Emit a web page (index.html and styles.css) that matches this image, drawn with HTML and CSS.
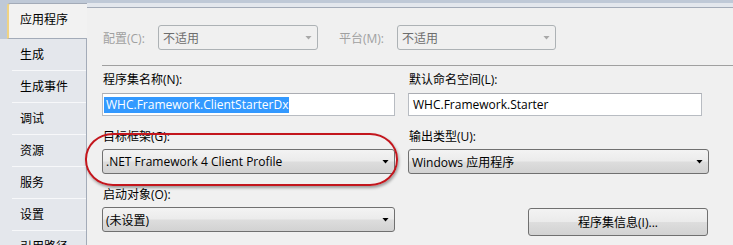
FILE: index.html
```html
<!DOCTYPE html>
<html lang="zh-CN">
  <head>
    <meta charset="UTF-8" />
    <title>应用程序</title>
    <link rel="stylesheet" href="styles.css">
  </head>
  <body>
    <div class="window">
      <!-- Left tabs -->
      <nav class="tabs">
        <div class="tab-head">
          <div class="tab tab-active">应用程序</div>
        </div>
        <div class="tab-list">
          <div class="tab">生成</div>
          <div class="tab">生成事件</div>
          <div class="tab">调试</div>
          <div class="tab">资源</div>
          <div class="tab">服务</div>
          <div class="tab">设置</div>
          <div class="tab">引用路径</div>
        </div>
      </nav>

      <!-- Page -->
      <main class="page">
        <div class="config-row">
          <span class="label-off label-config">配置(C):</span>
          <div class="combo combo-off combo-config">不适用</div>
          <span class="label-off label-platform">平台(M):</span>
          <div class="combo combo-off combo-platform">不适用</div>
        </div>
        <div class="divider"></div>

        <div class="form">
          <div class="field">
            <p class="label label-text">程序集名称(N):</p>
            <div class="textbox"><span class="selected">WHC.Framework.ClientStarterDx</span></div>
          </div>
          <div class="field">
            <p class="label label-text">默认命名空间(L):</p>
            <div class="textbox textbox-right">WHC.Framework.Starter</div>
          </div>

          <div class="field">
            <p class="label">目标框架(G):</p>
            <div class="combo">.NET Framework 4 Client Profile</div>
          </div>
          <div class="field">
            <p class="label">输出类型(U):</p>
            <div class="combo">Windows 应用程序</div>
          </div>

          <div class="field">
            <p class="label">启动对象(O):</p>
            <div class="combo">(未设置)</div>
          </div>
          <div class="field">
            <button class="button" type="button">程序集信息(I)...</button>
          </div>
        </div>
      </main>
    </div>

    <!-- red annotation ring -->
    <div class="callout"></div>
  </body>
</html>
```

FILE: styles.css
```css
* {
  margin: 0;
  padding: 0;
  box-sizing: border-box;
}
body {
  position: relative;
  width: 733px;
  height: 245px;
  overflow: hidden;
  background-color: #bfc9d7;
  font-family: "Open Sans", "Noto Sans CJK SC", sans-serif;
  font-size: 12px;
  color: #000;
}

.window {
  display: flex;
  margin-top: 3px;
  height: 242px;
  background-color: #e3e7ed;
}

/* Tabs */
.tabs {
  width: 87px;
  flex: none;
  display: flex;
  flex-direction: column;
}
.tab-head {
  padding-left: 7px;
  background-color: #bfc9d7;
}
.tab {
  height: 32px;
  padding-left: 20px;
  line-height: 32px;
  border-bottom: 1px solid #f7f8fa;
}
.tab-active {
  height: 36px;
  line-height: 32px;
  padding-left: 11px;
  background-color: #f2f2f2;
  border-top: 1px solid #a3abb8;
  border-bottom: 1px solid #a3abb8;
  border-left: 2px solid #efd384;
  border-top-left-radius: 3px;
}
.tab-list {
  flex: 1;
  background-color: #e4e7ec;
  border-right: 1px solid #a3abb8;
}
.tab-list .tab {
  margin-left: 12px;
  padding-left: 8px;
}

/* Page */
.page {
  flex: 1;
  margin-top: 4px;
  padding: 17px 0 0 15px;
  background-color: #f0f0f0;
  border-top: 1px solid #a3abb8;
}

.config-row {
  display: flex;
  align-items: center;
  height: 25px;
}
.label-off {
  color: #a0a0a0;
  padding-left: 1px;
}
.label-config {
  width: 56px;
}
.label-platform {
  width: 59px;
  margin-left: 20px;
}
.combo-config {
  width: 160px;
}
.combo-platform {
  width: 159px;
}

.divider {
  margin-top: 15px;
  height: 1px;
  background-color: #a0a0a0;
}

.form {
  display: grid;
  grid-template-columns: 293px 301px;
  column-gap: 13px;
  row-gap: 13px;
  margin-top: 6px;
}

.label {
  height: 16px;
  line-height: 16px;
  padding-left: 1px;
  margin-bottom: 4px;
}
.label-text {
  margin-bottom: 5px;
}

.textbox {
  height: 23px;
  padding: 3px 0 0 1px;
  line-height: 16px;
  background-color: #fff;
  border: 1px solid #b8bcc2;
  border-top-color: #abadb3;
  white-space: nowrap;
}
.textbox-right {
  width: 294px;
  padding-left: 4px;
}
.selected {
  display: inline-block;
  padding: 0 1px 0 2px;
  background-color: #3399ff;
  color: #fff;
}

.combo {
  display: flex;
  align-items: center;
  height: 25px;
  padding: 0 5px 0 3px;
  border: 1px solid #707070;
  border-radius: 3px;
  background: linear-gradient(#f3f3f3 0%, #ebebeb 48%, #dddddd 52%, #d2d2d2 100%);
  white-space: nowrap;
}
.combo::after {
  content: "";
  width: 7px;
  height: 4px;
  margin-left: auto;
  background-color: #000;
  clip-path: polygon(0 0, 100% 0, 50% 100%);
}
.combo-off {
  padding-left: 4px;
  color: #6d6d6d;
  background: #f0f0f0;
  border-color: #adb2b5;
}
.combo-off::after {
  background-color: #a8a8a8;
}

.button {
  display: block;
  width: 180px;
  height: 28px;
  margin: 21px 0 0 120px;
  border: 1px solid #707070;
  border-radius: 3px;
  background: linear-gradient(#f3f3f3 0%, #ebebeb 48%, #dddddd 52%, #d2d2d2 100%);
  font-family: inherit;
  font-size: 12px;
  color: #000;
}

/* annotation */
.callout {
  position: absolute;
  left: 85px;
  top: 133px;
  width: 313px;
  height: 53px;
  border: 2px solid #c3161d;
  border-radius: 28px / 26px;
  box-shadow: 1px 2px 3px rgba(0, 0, 0, 0.35);
  pointer-events: none;
}
```
